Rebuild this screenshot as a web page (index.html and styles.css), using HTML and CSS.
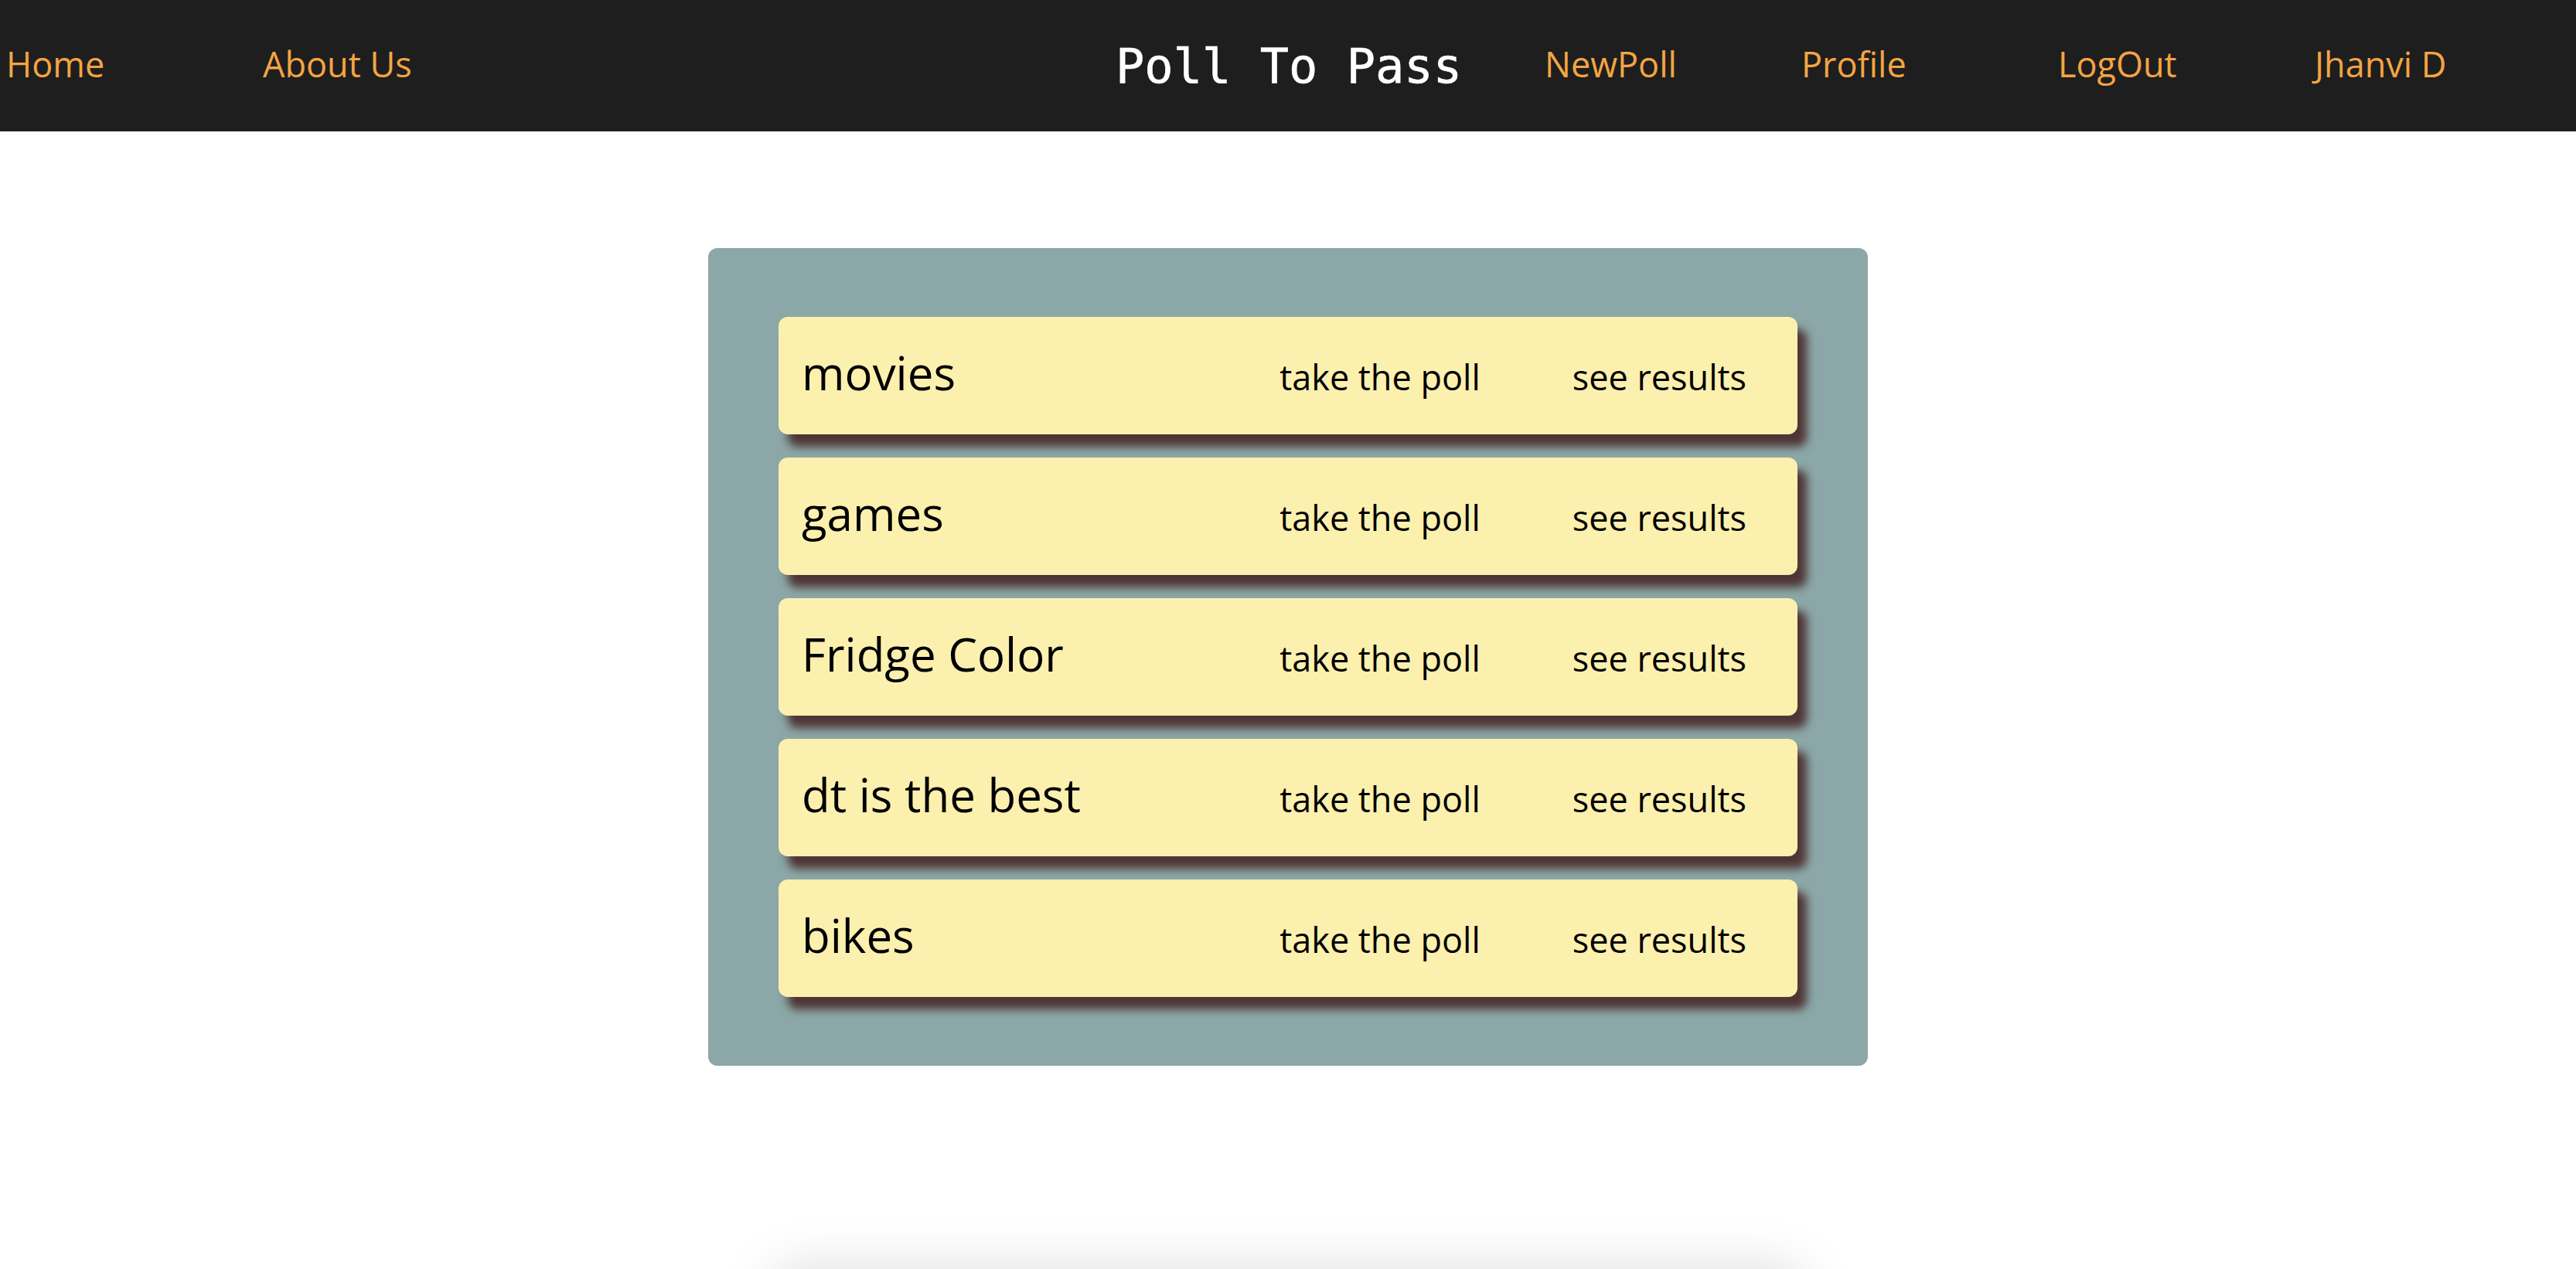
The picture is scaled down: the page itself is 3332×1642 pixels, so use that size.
FILE: index.html
```html
<!DOCTYPE html>
<html lang="en">
<head>
<meta charset="utf-8">
<title>Poll To Pass</title>
<link rel="stylesheet" href="styles.css">
</head>
<body>
<header class="navbar">
  <nav class="nav-group nav-left">
    <a class="nav-link" href="#">Home</a>
    <a class="nav-link" href="#">About Us</a>
  </nav>
  <div class="brand">Poll To Pass</div>
  <nav class="nav-group nav-right">
    <a class="nav-link" href="#">NewPoll</a>
    <a class="nav-link" href="#">Profile</a>
    <a class="nav-link" href="#">LogOut</a>
    <a class="nav-link" href="#">Jhanvi D</a>
  </nav>
</header>
<main class="content">
  <section class="poll-box">
    <div class="poll-card"><span class="poll-title">movies</span><a class="poll-action" href="#">take the poll</a><a class="poll-action results" href="#">see results</a></div>
    <div class="poll-card"><span class="poll-title">games</span><a class="poll-action" href="#">take the poll</a><a class="poll-action results" href="#">see results</a></div>
    <div class="poll-card"><span class="poll-title">Fridge Color</span><a class="poll-action" href="#">take the poll</a><a class="poll-action results" href="#">see results</a></div>
    <div class="poll-card"><span class="poll-title">dt is the best</span><a class="poll-action" href="#">take the poll</a><a class="poll-action results" href="#">see results</a></div>
    <div class="poll-card"><span class="poll-title">bikes</span><a class="poll-action" href="#">take the poll</a><a class="poll-action results" href="#">see results</a></div>
  </section>
  <div class="footer-panel"></div>
</main>
</body>
</html>
```
FILE: styles.css
```css
* { box-sizing: border-box; }

body {
  margin: 0;
  background: #ffffff;
  font-family: "Open Sans", "Noto Sans", sans-serif;
}

.navbar {
  display: grid;
  grid-template-columns: 1fr auto 1fr;
  align-items: center;
  height: 170px;
  padding: 0 6px 6px 8px;
  background: #1e1e1e;
}

.nav-group {
  display: flex;
}

.nav-right {
  justify-self: end;
}

.nav-link {
  width: 332px;
  color: #f4a443;
  font-size: 45px;
  text-decoration: none;
}

.brand {
  color: #ffffff;
  font-family: "DejaVu Sans Mono", "Liberation Mono", monospace;
  font-size: 62px;
  padding-top: 6px;
  -webkit-text-stroke: 0.6px #ffffff;
}

.content {
  display: flex;
  flex-direction: column;
  align-items: center;
  padding-top: 151px;
}

.poll-box {
  width: 1500px;
  padding: 89px 91px;
  background: #8ca7a7;
  border-radius: 12px;
  display: flex;
  flex-direction: column;
  gap: 30px;
}

.poll-card {
  display: flex;
  align-items: baseline;
  height: 152px;
  padding: 31px 66px 0 30px;
  background: #fcf0ae;
  border-radius: 12px;
  box-shadow: 12px 16px 12px #4f3535;
}

.poll-title {
  flex: 1;
  font-size: 60px;
  color: #000;
}

.poll-action {
  font-size: 45px;
  color: #000;
  text-decoration: none;
}

.results {
  margin-left: 119px;
}

.footer-panel {
  width: 1320px;
  height: 200px;
  margin-top: 265px;
  background: #fff;
  box-shadow: 0 0 70px rgba(0, 0, 0, 0.15);
}
```
